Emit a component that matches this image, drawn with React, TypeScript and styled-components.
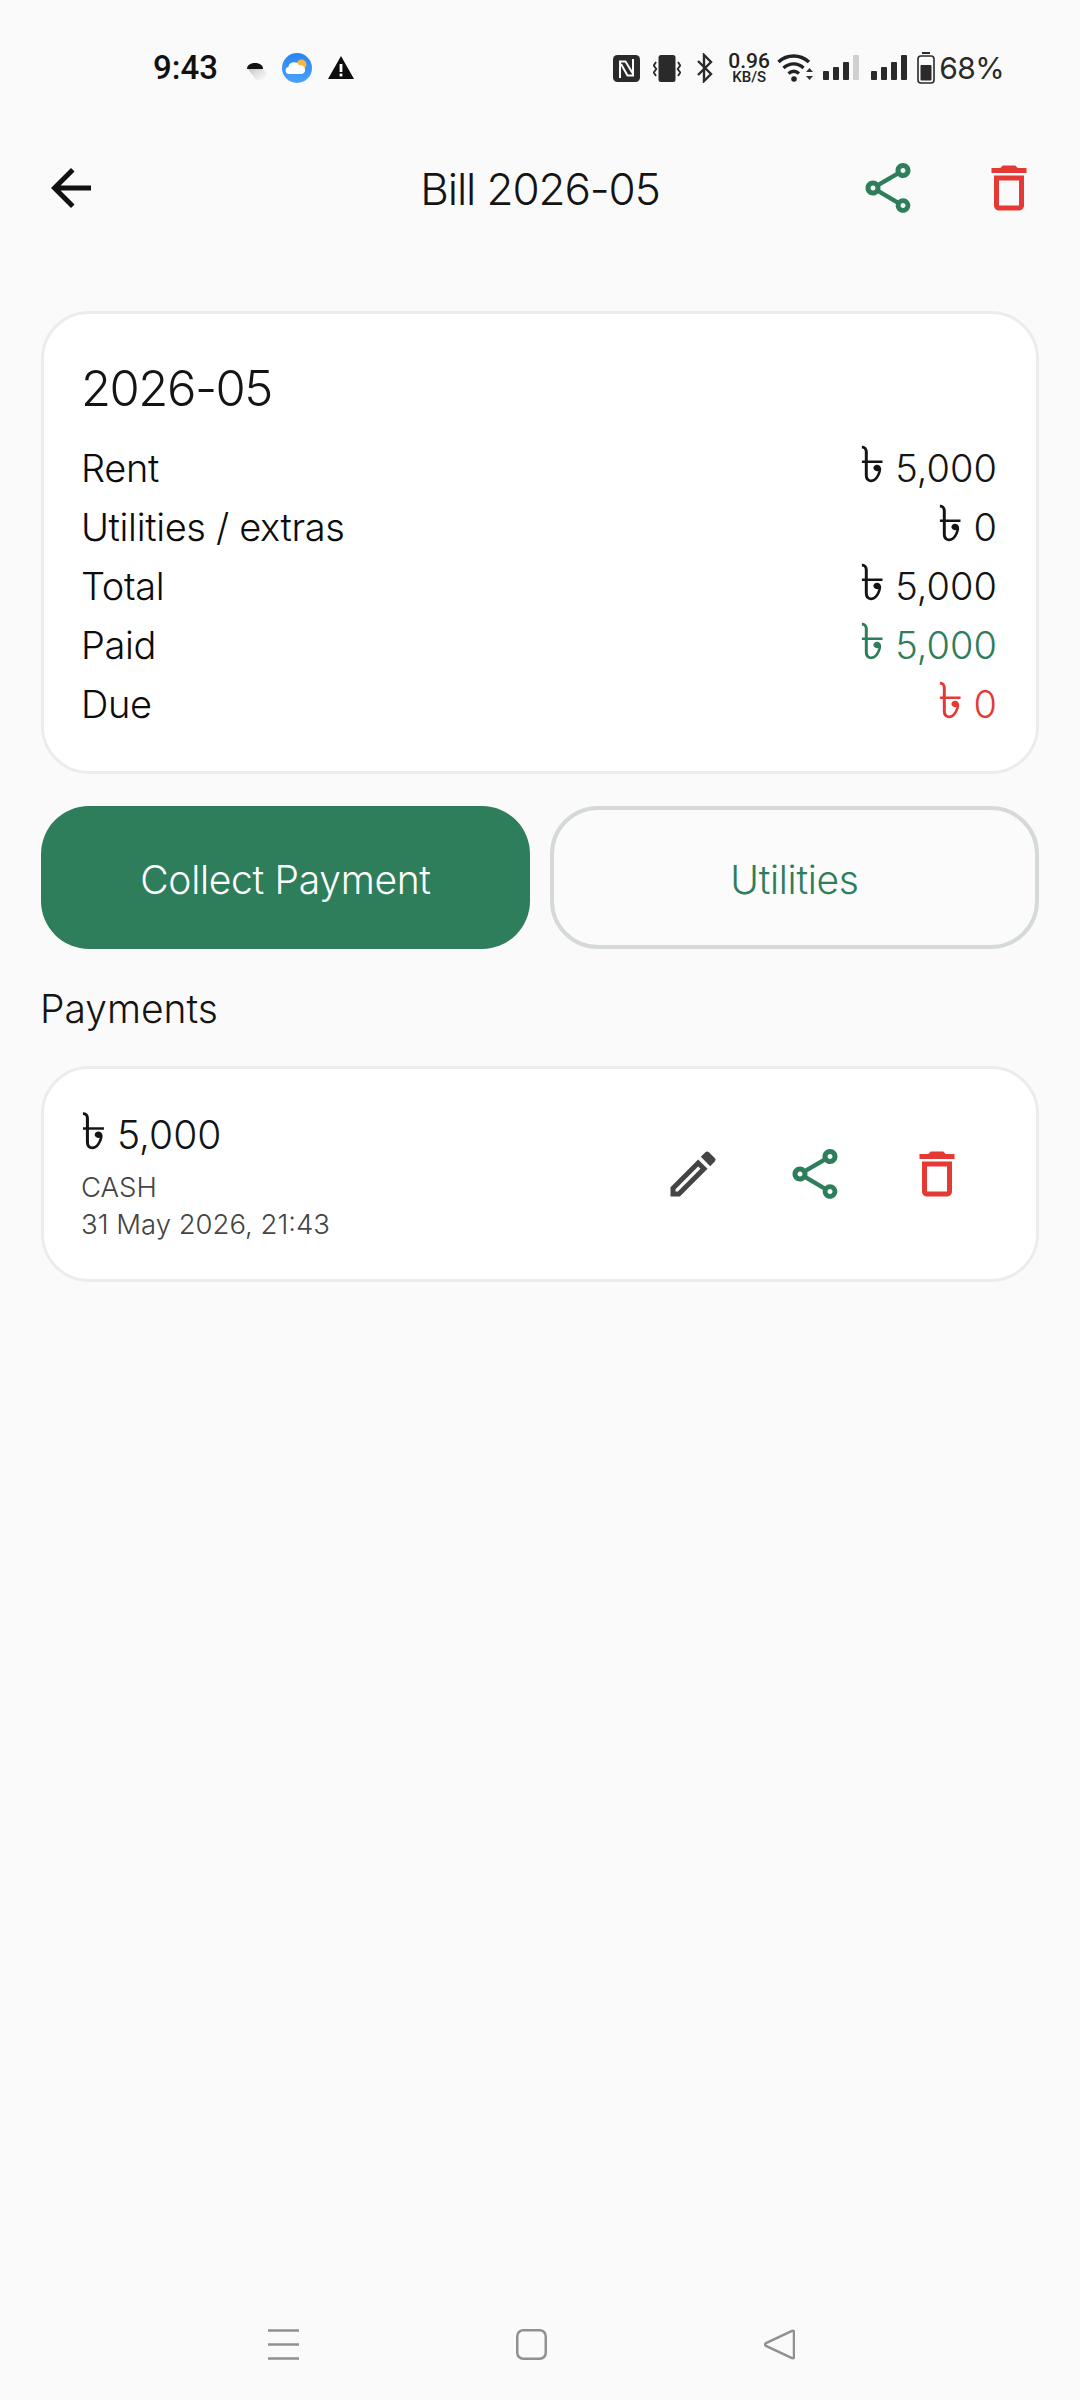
import React, { FC } from 'react';
import styled, { createGlobalStyle } from 'styled-components';
import { MdArrowBack, MdOutlineDelete, MdOutlineEdit, MdOutlineShare } from 'react-icons/md';

const GREEN = '#2e7d5b';
const RED = '#e53935';
const TEXT = '#141414';

const GlobalStyle = createGlobalStyle`
  html, body {
    margin: 0;
    padding: 0;
    background: #fafafa;
    font-family: Inter, 'Noto Sans', 'DejaVu Sans', sans-serif;
    color: ${TEXT};
  }
`;

const Page = styled.div`
  width: 1080px;
  height: 2400px;
  display: flex;
  flex-direction: column;
  background: #fafafa;
  overflow: hidden;
`;

const StatusBar = styled.div`
  height: 136px;
  flex: none;
  display: flex;
  align-items: center;
  justify-content: space-between;
  padding: 0 76px 0 153px;
  box-sizing: border-box;
`;

const StatusGroup = styled.div`
  display: flex;
  align-items: center;
`;

const Clock = styled.span`
  font-family: Roboto, sans-serif;
  font-weight: 500;
  font-size: 33px;
  color: #111;
  line-height: 30px;
  width: 64px;
`;

const Slot = styled.span<{ $w: number; $ml: number }>`
  display: flex;
  align-items: center;
  justify-content: center;
  width: ${(p) => p.$w}px;
  margin-left: ${(p) => p.$ml}px;
`;

const Speed = styled.span`
  display: flex;
  flex-direction: column;
  align-items: center;
  font-family: Roboto, sans-serif;
  font-weight: 500;
  color: #222;
  width: 42px;
  margin-left: 14px;
`;

const SpeedValue = styled.span`
  font-size: 21px;
  line-height: 17px;
`;

const SpeedUnit = styled.span`
  font-size: 15px;
  line-height: 14px;
`;

const BatteryText = styled.span`
  font-family: Inter, sans-serif;
  font-weight: 400;
  font-size: 30px;
  letter-spacing: -0.6px;
  line-height: 30px;
  color: #2a2a2a;
  margin-left: 4px;
  white-space: nowrap;
`;

const TopBar = styled.header`
  height: 104px;
  flex: none;
  display: grid;
  grid-template-columns: 1fr auto 1fr;
  align-items: center;
  padding: 0 41px;
`;

const BarTitle = styled.h1`
  margin: 0;
  padding-top: 2px;
  text-align: center;
  font-weight: 300;
  font-size: 44px;
  letter-spacing: -1.1px;
  line-height: 50px;
`;

const IconRow = styled.div<{ $gap: number }>`
  display: flex;
  align-items: center;
  justify-content: flex-end;
  gap: ${(p) => p.$gap}px;
`;

const Icon = styled.span<{ $color: string }>`
  display: flex;
  width: 60px;
  height: 60px;
  color: ${(p) => p.$color};
  svg {
    width: 60px;
    height: 60px;
  }
`;

const Content = styled.main`
  flex: 1;
  padding: 71px 41px 0;
  display: flex;
  flex-direction: column;
`;

const Card = styled.section`
  background: #fff;
  border: 3px solid #ececec;
  border-radius: 48px;
  box-sizing: border-box;
`;

const SummaryCard = styled(Card)`
  height: 463px;
  padding: 44px 39px 0 37px;
`;

const Month = styled.h2`
  margin: 0 0 19px;
  font-weight: 300;
  font-size: 49px;
  letter-spacing: -1.5px;
  line-height: 62px;
`;

const Row = styled.div`
  display: flex;
  justify-content: space-between;
  align-items: baseline;
  height: 59px;
  line-height: 59px;
  font-size: 38px;
  font-weight: 300;
`;

const Label = styled.span<{ $strong?: boolean }>`
  font-weight: ${(p) => (p.$strong ? 340 : 280)};
  letter-spacing: -0.35px;
  color: #0c0c0c;
`;

const Amount = styled.span<{ $color?: string }>`
  color: ${(p) => p.$color || TEXT};
`;

const Taka = styled.span`
  font-size: 1.32em;
  line-height: 0;
`;

const Actions = styled.div`
  display: grid;
  grid-template-columns: 1fr 1fr;
  gap: 20px;
  margin-top: 32px;
`;

const ActionButton = styled.button<{ $primary?: boolean }>`
  height: 143px;
  box-sizing: border-box;
  border-radius: 48px;
  padding: 4px 0 0;
  font-family: inherit;
  font-weight: 300;
  font-size: 39px;
  letter-spacing: -0.3px;
  background: ${(p) => (p.$primary ? GREEN : '#fafbfa')};
  color: ${(p) => (p.$primary ? '#fff' : GREEN)};
  border: ${(p) => (p.$primary ? 'none' : '4px solid #d5dad7')};
`;

const SectionTitle = styled.h3`
  margin: 36px 0 0 -1px;
  font-weight: 300;
  font-size: 39px;
  line-height: 48px;
`;

const PaymentCard = styled(Card)`
  margin-top: 33px;
  height: 216px;
  padding: 4px 69px 0 37px;
  display: flex;
  align-items: center;
  justify-content: space-between;
`;

const PaymentInfo = styled.div`
  display: flex;
  flex-direction: column;
`;

const PaymentAmount = styled.span`
  font-size: 39px;
  font-weight: 300;
  line-height: 50px;
  margin-bottom: 9px;
`;

const PaymentMeta = styled.span`
  font-size: 27.5px;
  font-weight: 300;
  line-height: 37px;
  color: #444;
`;

const PaymentIcons = styled(IconRow)`
  margin-top: -4px;
`;

const NavBar = styled.nav`
  flex: none;
  height: 71px;
  display: flex;
  gap: 217px;
  padding-left: 268px;
`;

const NavIcon = styled.svg`
  width: 31px;
  height: 31px;
  fill: none;
  stroke: #909090;
  stroke-width: 2.5;
`;

const AndroidBadge = () => (
  <svg width="24" height="24" viewBox="0 0 24 24">
    <defs>
      <linearGradient id="ab" x1="0" y1="0" x2="1" y2="1">
        <stop offset="0" stopColor="#999" stopOpacity="0.6" />
        <stop offset="1" stopColor="#ccc" stopOpacity="0" />
      </linearGradient>
    </defs>
    <path d="M5 13h15l4 5-5 6H13z" fill="url(#ab)" />
    <path d="M4 13c0-3.500 3-6 8-6s8 2.500 8 6z" fill="#111" />
  </svg>
);

const WeatherBadge = () => (
  <svg width="30" height="30" viewBox="0 0 30 30">
    <defs>
      <linearGradient id="wb" x1="0" y1="0" x2="0" y2="1">
        <stop offset="0" stopColor="#2b84ee" />
        <stop offset="1" stopColor="#4aa2fa" />
      </linearGradient>
    </defs>
    <circle cx="15" cy="15" r="15" fill="url(#wb)" />
    <circle cx="19.500" cy="11.500" r="5" fill="#f6b73c" />
    <path d="M7 21a3.600 3.600 0 0 1-.6-7.100A5.600 5.600 0 0 1 17 12.600a4.300 4.300 0 0 1 6 3.900A4.200 4.200 0 0 1 19.500 21z" fill="#fff" />
  </svg>
);

const WarningBadge = () => (
  <svg width="26" height="24" viewBox="0 0 26 24">
    <path d="M13 0 26 23H0z" fill="#0c0c0c" />
    <rect x="11.600" y="8" width="2.800" height="8" fill="#fff" />
    <rect x="11.600" y="17.600" width="2.800" height="2.800" fill="#fff" />
  </svg>
);

const NfcBadge = () => (
  <svg width="27" height="27" viewBox="0 0 27 27">
    <rect width="27" height="27" rx="4.500" fill="#2a2a2a" />
    <path d="M7 23V6.500h5.500l7 11.500M20 4v16.500h-5.500L8 9" fill="none" stroke="#fafafa" strokeWidth="2" />
  </svg>
);

const VibrateBadge = () => (
  <svg width="28" height="27" viewBox="0 0 28 27">
    <rect x="5.500" y="0" width="17" height="27" rx="2.500" fill="#2a2a2a" />
    <path d="M3 7 .8 10.500 3.300 14 .8 17.500 3 21M25 7l2.200 3.500L24.700 14l2.500 3.500L25 21" fill="none" stroke="#2a2a2a" strokeWidth="1.800" />
  </svg>
);

const BluetoothBadge = () => (
  <svg width="18" height="30" viewBox="0 0 18 30">
    <path d="M2 8 15 21l-7 7V2l7 7L2 22" fill="none" stroke="#2a2a2a" strokeWidth="2.400" />
  </svg>
);

const WifiBadge = () => (
  <svg width="37" height="30" viewBox="0 0 37 30">
    <path d="M1.500 9C10 1 23 1 32 9M6.500 15c6-5.500 14.500-5.500 20 0M11.500 20.500c3.500-3 7-3 10.500 0" fill="none" stroke="#222" strokeWidth="3.400" />
    <circle cx="17" cy="26" r="2.800" fill="#222" />
    <path d="M29 19l3.500-4 3.500 4zM29 23h7l-3.500 4z" fill="#333" />
  </svg>
);

const SignalBadge: FC<{ dim?: boolean }> = ({ dim }) => (
  <svg width="36" height="26" viewBox="0 0 36 26">
    <rect x="0" y="16" width="6" height="9" rx="1" fill="#2a2a2a" />
    <rect x="10" y="12" width="6" height="13" rx="1" fill="#2a2a2a" />
    <rect x="20" y="7" width="6" height="18" rx="1" fill="#2a2a2a" />
    <rect x="30" y="0" width="6" height="25" rx="1" fill={dim ? '#d0d0d0' : '#2a2a2a'} />
  </svg>
);

const BatteryBadge = () => (
  <svg width="18" height="32" viewBox="0 0 18 32">
    <rect x="5" y="0" width="8" height="2" fill="#2a2a2a" />
    <rect x="1" y="4" width="16" height="27" rx="3" fill="none" stroke="#2a2a2a" strokeWidth="1.600" />
    <rect x="3.500" y="13" width="11" height="15.500" rx="1" fill="#2a2a2a" />
  </svg>
);

const rows = [
  { label: 'Rent', amount: '5,000' },
  { label: 'Utilities / extras', amount: '0' },
  { label: 'Total', amount: '5,000', strong: true },
  { label: 'Paid', amount: '5,000', color: GREEN },
  { label: 'Due', amount: '0', color: RED },
];

export default function App() {
  return (
    <Page>
      <GlobalStyle />
      <StatusBar>
        <StatusGroup>
          <Clock>9:43</Clock>
          <Slot $w={24} $ml={26}><AndroidBadge /></Slot>
          <Slot $w={30} $ml={15}><WeatherBadge /></Slot>
          <Slot $w={26} $ml={16}><WarningBadge /></Slot>
        </StatusGroup>
        <StatusGroup>
          <Slot $w={27} $ml={0}><NfcBadge /></Slot>
          <Slot $w={28} $ml={13}><VibrateBadge /></Slot>
          <Slot $w={18} $ml={15}><BluetoothBadge /></Slot>
          <Speed>
            <SpeedValue>0.96</SpeedValue>
            <SpeedUnit>KB/S</SpeedUnit>
          </Speed>
          <Slot $w={37} $ml={7}><WifiBadge /></Slot>
          <Slot $w={36} $ml={9}><SignalBadge dim /></Slot>
          <Slot $w={36} $ml={12}><SignalBadge /></Slot>
          <Slot $w={18} $ml={10}><BatteryBadge /></Slot>
          <BatteryText>68%</BatteryText>
        </StatusGroup>
      </StatusBar>

      <TopBar>
        <Icon $color="#111"><MdArrowBack /></Icon>
        <BarTitle>Bill 2026-05</BarTitle>
        <IconRow $gap={61}>
          <Icon $color={GREEN}><MdOutlineShare /></Icon>
          <Icon $color={RED}><MdOutlineDelete /></Icon>
        </IconRow>
      </TopBar>

      <Content>
        <SummaryCard>
          <Month>2026-05</Month>
          {rows.map((row) => (
            <Row key={row.label}>
              <Label $strong={row.strong}>{row.label}</Label>
              <Amount $color={row.color}><Taka>৳</Taka> {row.amount}</Amount>
            </Row>
          ))}
        </SummaryCard>

        <Actions>
          <ActionButton $primary>Collect Payment</ActionButton>
          <ActionButton>Utilities</ActionButton>
        </Actions>

        <SectionTitle>Payments</SectionTitle>

        <PaymentCard>
          <PaymentInfo>
            <PaymentAmount><Taka>৳</Taka> 5,000</PaymentAmount>
            <PaymentMeta>CASH</PaymentMeta>
            <PaymentMeta>31 May 2026, 21:43</PaymentMeta>
          </PaymentInfo>
          <PaymentIcons $gap={62}>
            <Icon $color="#444"><MdOutlineEdit /></Icon>
            <Icon $color={GREEN}><MdOutlineShare /></Icon>
            <Icon $color={RED}><MdOutlineDelete /></Icon>
          </PaymentIcons>
        </PaymentCard>
      </Content>

      <NavBar>
        <NavIcon viewBox="0 0 31 31">
          <path d="M0 1.500h31M0 15.500h31M0 29.500h31" />
        </NavIcon>
        <NavIcon viewBox="0 0 31 31">
          <rect x="1.250" y="1.250" width="28.500" height="28.500" rx="6" />
        </NavIcon>
        <NavIcon viewBox="0 0 31 31">
          <path d="M28 2c1-.6 2-.1 2 1v25c0 1.100-1 1.600-2 1L2 17c-1.300-.8-1.300-2.200 0-3z" />
        </NavIcon>
      </NavBar>
    </Page>
  );
}
